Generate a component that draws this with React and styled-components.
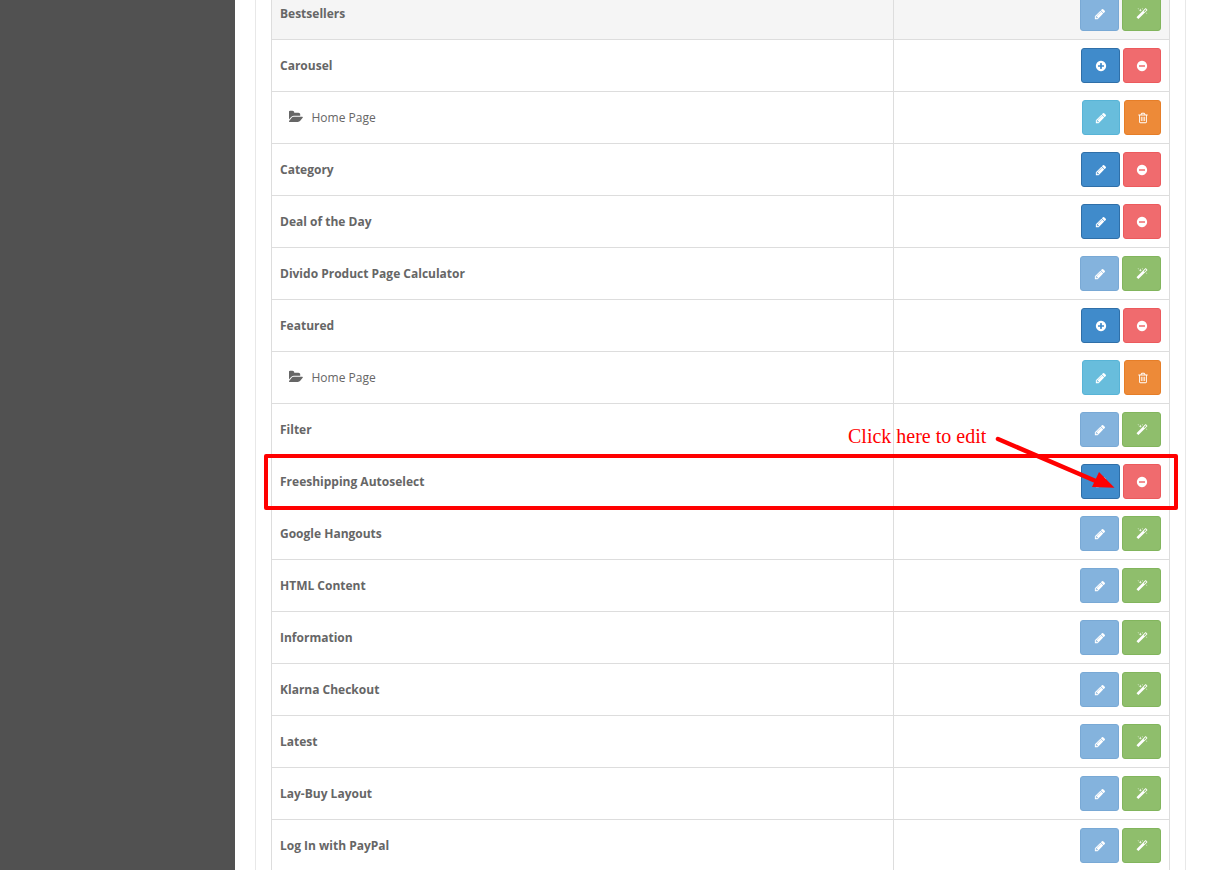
import React from 'react';
import styled, { createGlobalStyle } from 'styled-components';

const GlobalStyle = createGlobalStyle`
    html, body {
        margin: 0;
        padding: 0;
        height: 100%;
        overflow: hidden;
        background: #fff;
    }
    body {
        font-family: "Open Sans", "Liberation Sans", sans-serif;
        font-size: 12px;
        color: #666;
    }
`

const Page = styled.div`
    position: relative;
    display: flex;
    width: 1206px;
    height: 870px;
    overflow: hidden;
`

const Sidebar = styled.div`
    flex: 0 0 235px;
    background: #515151;
`

const Content = styled.div`
    flex: 1;
    padding: 0 20px;
`

const Panel = styled.div`
    display: flow-root;
    height: 100%;
    box-sizing: border-box;
    border-left: 1px solid #e8e8e8;
    border-right: 1px solid #e8e8e8;
    padding: 0 15px;
`

const Table = styled.div`
    margin-top: -12px;
    border-left: 1px solid #ddd;
    border-right: 1px solid #ddd;
`

const Row = styled.div`
    display: grid;
    grid-template-columns: 622px 1fr;
    height: 52px;
    box-sizing: border-box;
    border-bottom: 1px solid #ddd;
    background: ${props => props.$shaded ? '#f5f5f5' : '#fff'};
`

const NameCell = styled.div`
    display: flex;
    align-items: center;
    padding-left: ${props => props.$child ? '17px' : '8px'};
    padding-bottom: 1px;
    font-weight: ${props => props.$child ? 400 : 700};
    border-right: 1px solid #ddd;
`

const ActionCell = styled.div`
    display: flex;
    justify-content: flex-end;
    align-items: flex-start;
    gap: ${props => props.$gap}px;
    padding: 8px 8px 0 0;
`

const palette = {
    primary: { bg: '#408bcb', border: '#2f6fa8', width: 39 },
    danger: { bg: '#f06b6e', border: '#ec5a5d', width: 38 },
    install: { bg: '#84b3dd', border: '#79a9d5', width: 39 },
    magic: { bg: '#8fbe6c', border: '#82b55d', width: 39 },
    info: { bg: '#68bddc', border: '#58b4d6', width: 38 },
    remove: { bg: '#ed8a38', border: '#e67e28', width: 37 },
}

const Button = styled.div`
    display: flex;
    align-items: center;
    justify-content: center;
    box-sizing: border-box;
    width: ${props => palette[props.$kind].width}px;
    height: 35px;
    border-radius: 3px;
    border: 1px solid ${props => palette[props.$kind].border};
    background: ${props => palette[props.$kind].bg};
    color: #fff;
`

const Icon = styled.svg`
    flex: none;
    width: 12px;
    height: 12px;
    fill: currentColor;
`

const FolderIcon = styled(Icon)`
    width: 14px;
    height: 14px;
    margin-right: 8.5px;
`

const circle = 'm320-64q0 209-103 385.5t-279.5 279.5-385.5 103-385.5-103-279.5-279.5-103-385.5 103-385.5 279.5-279.5 385.5-103 385.5 103 279.5 279.5 103 385.5z'

const paths = {
    pencil: 'M491 1536l91-91-235-235-91 91v107h128v128h107zm523-928q0-22-22-22-10 0-17 7l-542 542q-7 7-7 17 0 22 22 22 10 0 17-7l542-542q7-7 7-17zm-54-192l416 416-832 832h-416v-416zm683 96q0 53-37 90l-166 166-416-416 166-165q36-38 90-38 53 0 91 38l235 234q37 39 37 91z',
    magic: 'M1254 581l293-293-107-107-293 293zm447-293q0 27-18 45l-1286 1286q-18 18-45 18t-45-18l-198-198q-18-18-18-45t18-45l1286-1286q18-18 45-18t45 18l198 198q18 18 18 45zm-1351-190l98 30-98 30-30 98-30-98-98-30 98-30 30-98zm350 162l196 60-196 60-60 196-60-196-196-60 196-60 60-196zm930 478l98 30-98 30-30 98-30-98-98-30 98-30 30-98zm-640-640l98 30-98 30-30 98-30-98-98-30 98-30 30-98z',
    plus: 'M1344 960v-128q0-26-19-45t-45-19h-256v-256q0-26-19-45t-45-19h-128q-26 0-45 19t-19 45v256h-256q-26 0-45 19t-19 45v128q0 26 19 45t45 19h256v256q0 26 19 45t45 19h128q26 0 45-19t19-45v-256h256q26 0 45-19t19-45z' + circle,
    minus: 'M1344 960v-128q0-26-19-45t-45-19h-768q-26 0-45 19t-19 45v128q0 26 19 45t45 19h768q26 0 45-19t19-45z' + circle,
    trash: 'M704 736v576q0 14-9 23t-23 9h-64q-14 0-23-9t-9-23v-576q0-14 9-23t23-9h64q14 0 23 9t9 23zm256 0v576q0 14-9 23t-23 9h-64q-14 0-23-9t-9-23v-576q0-14 9-23t23-9h64q14 0 23 9t9 23zm256 0v576q0 14-9 23t-23 9h-64q-14 0-23-9t-9-23v-576q0-14 9-23t23-9h64q14 0 23 9t9 23zm128 724v-948h-896v948q0 22 7 40.5t14.5 27 10.5 8.5h832q3 0 10.5-8.5t14.5-27 7-40.5zm-672-1076h448l-48-117q-7-9-17-11h-317q-10 2-17 11zm928 32v64q0 14-9 23t-23 9h-96v948q0 83-47 143.5t-113 60.5h-832q-66 0-113-58.5t-47-141.5v-952h-96q-14 0-23-9t-9-23v-64q0-14 9-23t23-9h309l70-167q15-37 54-63t79-26h320q40 0 79 26t54 63l70 167h309q14 0 23 9t9 23z',
    folder: 'M1781 931q0 35-35 74l-336 396q-43 51-120.5 86.5t-143.5 35.5h-1088q-34 0-60.5-13t-26.5-43q0-35 35-74l336-396q43-51 120.5-86.5t143.5-35.5h1088q34 0 60.5 13t26.5 43zm-343-344v160h-832q-94 0-197 47.5t-164 119.5l-337 396-5 6q0-4-.5-12.5t-.5-12.5v-960q0-92 66-158t158-66h320q92 0 158 66t66 158v32h544q92 0 158 66t66 158z',
}

const Glyph = ({ name }) => (
    <Icon viewBox="0 0 1792 1792"><path d={paths[name]} /></Icon>
)

const Callout = styled.div`
    position: absolute;
    left: 264px;
    top: 454px;
    width: 914px;
    height: 56px;
    box-sizing: border-box;
    border: 4px solid #f00;
    border-radius: 2px;
`

const CalloutLabel = styled.div`
    position: absolute;
    left: 848px;
    top: 424px;
    font-family: "Liberation Serif", serif;
    font-size: 20px;
    line-height: 24px;
    color: #f00;
`

const Arrow = styled.svg`
    position: absolute;
    left: 990px;
    top: 430px;
    width: 130px;
    height: 62px;
`

const actions = {
    add: { kind: 'primary', icon: 'plus' },
    edit: { kind: 'primary', icon: 'pencil' },
    uninstall: { kind: 'danger', icon: 'minus' },
    disabled: { kind: 'install', icon: 'pencil' },
    install: { kind: 'magic', icon: 'magic' },
    editChild: { kind: 'info', icon: 'pencil' },
    removeChild: { kind: 'remove', icon: 'trash' },
}

const idle = ['disabled', 'install']
const multi = ['add', 'uninstall']
const single = ['edit', 'uninstall']
const child = ['editChild', 'removeChild']

const rows = [
    { name: 'Bestsellers', actions: idle, shaded: true },
    { name: 'Carousel', actions: multi },
    { name: 'Home Page', actions: child, child: true },
    { name: 'Category', actions: single },
    { name: 'Deal of the Day', actions: single },
    { name: 'Divido Product Page Calculator', actions: idle },
    { name: 'Featured', actions: multi },
    { name: 'Home Page', actions: child, child: true },
    { name: 'Filter', actions: idle },
    { name: 'Freeshipping Autoselect', actions: single },
    { name: 'Google Hangouts', actions: idle },
    { name: 'HTML Content', actions: idle },
    { name: 'Information', actions: idle },
    { name: 'Klarna Checkout', actions: idle },
    { name: 'Latest', actions: idle },
    { name: 'Lay-Buy Layout', actions: idle },
    { name: 'Log In with PayPal', actions: idle },
]

const App = () => {
    return (
        <Page>
            <GlobalStyle />
            <Sidebar />
            <Content>
                <Panel>
                    <Table>
                        {rows.map((row, i) => (
                            <Row key={i} $shaded={row.shaded}>
                                <NameCell $child={row.child}>
                                    {row.child && (
                                        <FolderIcon viewBox="0 0 1792 1792"><path d={paths.folder} /></FolderIcon>
                                    )}
                                    {row.name}
                                </NameCell>
                                <ActionCell $gap={row.child ? 4 : 3}>
                                    {row.actions.map(type => (
                                        <Button key={type} $kind={actions[type].kind}>
                                            <Glyph name={actions[type].icon} />
                                        </Button>
                                    ))}
                                </ActionCell>
                            </Row>
                        ))}
                    </Table>
                </Panel>
            </Content>
            <Callout />
            <CalloutLabel>Click here to edit</CalloutLabel>
            <Arrow viewBox="0 0 130 62">
                <line x1="8" y1="9" x2="108" y2="52" stroke="#f00" strokeWidth="4.5" strokeLinecap="round" />
                <polygon points="124.5,57.7 102,57 109,42" fill="#f00" />
            </Arrow>
        </Page>
    )
}

export default App;
